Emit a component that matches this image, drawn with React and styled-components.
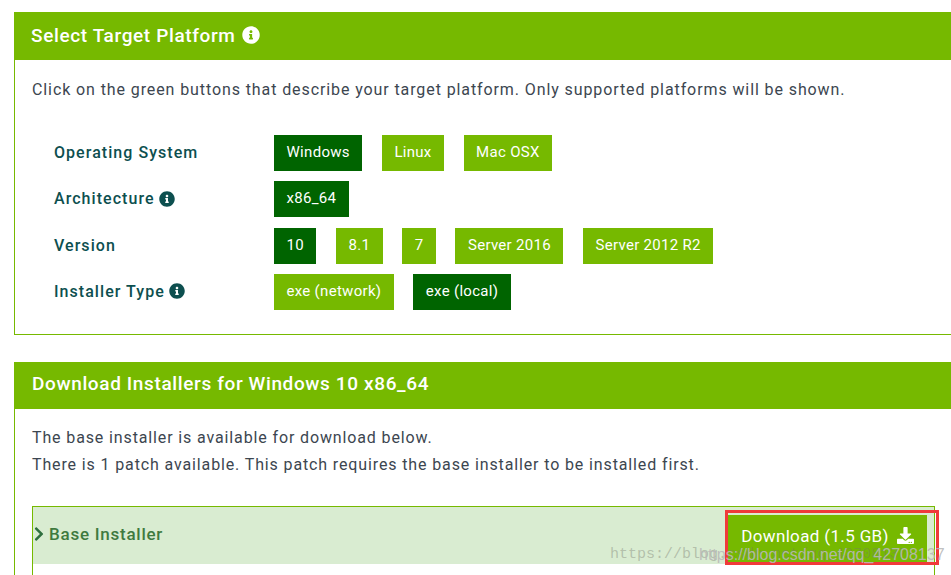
import React from 'react'
import styled, { createGlobalStyle } from 'styled-components'
import { FaInfoCircle, FaChevronRight, FaDownload } from 'react-icons/fa'

const rows = [
  { label: 'Operating System', options: [['Windows', true], ['Linux'], ['Mac OSX']] },
  { label: 'Architecture', info: true, options: [['x86_64', true]] },
  { label: 'Version', options: [['10', true], ['8.1'], ['7'], ['Server 2016'], ['Server 2012 R2']] },
  { label: 'Installer Type', info: true, options: [['exe (network)'], ['exe (local)', true]] },
]

const App = () => {
  return (
    <Root>
      <GlobalStyle />
      <Panel>
        <PanelHeader>
          Select Target Platform<HeaderInfo />
        </PanelHeader>
        <PanelBody>
          <Intro>Click on the green buttons that describe your target platform. Only supported platforms will be shown.</Intro>
          <Selector>
            {rows.map(row => (
              <Row key={row.label}>
                <RowLabel>
                  {row.label}
                  {row.info && <LabelInfo />}
                </RowLabel>
                <Options>
                  {row.options.map(([text, active]) => (
                    <Option key={text} $active={active}>{text}</Option>
                  ))}
                </Options>
              </Row>
            ))}
          </Selector>
        </PanelBody>
      </Panel>
      <Panel $second>
        <PanelHeader $second>Download Installers for Windows 10 x86_64</PanelHeader>
        <PanelBody $open>
          <Notes>
            The base installer is available for download below.<br />
            There is 1 patch available. This patch requires the base installer to be installed first.
          </Notes>
          <Accordion>
            <AccordionHeader>
              <Title>
                <FaChevronRight />
                Base Installer
              </Title>
              <DownloadButton>
                Download (1.5 GB) <FaDownload />
              </DownloadButton>
            </AccordionHeader>
          </Accordion>
        </PanelBody>
      </Panel>
      <RedMark />
      <Watermark $faint>https://blog.csdn.net/qq_42708137</Watermark>
      <Watermark>https://blog.csdn.net/qq_42708137</Watermark>
    </Root>
  )
}

const GlobalStyle = createGlobalStyle`
  html, body {
    margin: 0;
    height: 100%;
    overflow: hidden;
    background: #fff;
  }
`

const Root = styled.div`
  position: relative;
  width: 951px;
  height: 575px;
  overflow: hidden;
  padding: 12px 0 0 14px;
  box-sizing: border-box;
  font-family: 'Roboto', 'Liberation Sans', sans-serif;
`

const Panel = styled.section`
  width: 960px;
  margin-top: ${props => props.$second ? '27px' : '0'};
`

const PanelHeader = styled.h2`
  display: flex;
  align-items: center;
  height: ${props => props.$second ? '44px' : '46px'};
  margin: 0;
  padding-left: ${props => props.$second ? '18px' : '17px'};
  padding-bottom: ${props => props.$second ? '3px' : '2px'};
  background: #76b900;
  color: #fff;
  font-size: 19px;
  font-weight: 500;
  letter-spacing: 0.63px;
  white-space: pre;
`

const HeaderInfo = styled(FaInfoCircle)`
  width: 18px;
  height: 18px;
  margin-left: 6px;
`

const PanelBody = styled.div`
  border-left: 1px solid #76b900;
  border-bottom: ${props => props.$open ? 'none' : '1px solid #76b900'};
  padding: ${props => props.$open ? '15px' : '18px'} 0 0 17px;
  height: ${props => props.$open ? '200px' : 'auto'};
  padding-bottom: ${props => props.$open ? '0' : '24px'};
`

const Intro = styled.p`
  margin: 0 0 35px;
  color: #3c4650;
  font-size: 16px;
  line-height: 22px;
  letter-spacing: 0.9px;
  position: relative;
  top: 1px;
`

const Selector = styled.div`
  display: flex;
  flex-direction: column;
  gap: 10.3px;
  padding-left: 22px;
`

const Row = styled.div`
  display: flex;
  align-items: center;
`

const RowLabel = styled.div`
  display: flex;
  align-items: center;
  width: 220px;
  padding-bottom: 1px;
  color: #0d4f4f;
  font-size: 16px;
  font-weight: 500;
  letter-spacing: 1.05px;
`

const LabelInfo = styled(FaInfoCircle)`
  width: 16px;
  height: 16px;
  margin-left: 4px;
`

const Options = styled.div`
  display: flex;
  gap: 19.5px;
`

const Option = styled.div`
  height: 36px;
  line-height: 35px;
  padding: 0 12.5px;
  background: ${props => props.$active ? '#006400' : '#76b900'};
  color: #fff;
  font-size: 15px;
  letter-spacing: 0.3px;
`

const Notes = styled.p`
  margin: 0 0 28px;
  color: #3c4650;
  font-size: 16px;
  line-height: 27px;
  letter-spacing: 0.87px;
`

const Accordion = styled.div`
  width: 901px;
  height: 80px;
  border-top: 1px solid #76b900;
  border-left: 1px solid #76b900;
  border-right: 1px solid #76b900;
`

const AccordionHeader = styled.div`
  display: flex;
  align-items: center;
  justify-content: space-between;
  height: 57px;
  padding-right: 7px;
  background: #d9ecd1;
`

const Title = styled.div`
  display: flex;
  align-items: center;
  gap: 4px;
  padding-bottom: 2px;
  color: #3f7a3f;
  font-size: 17px;
  font-weight: 500;
  letter-spacing: 0.75px;

  svg {
    width: 12px;
    height: 16px;
    color: #2f6f3f;
  }
`

const DownloadButton = styled.div`
  display: flex;
  align-items: center;
  justify-content: center;
  gap: 8px;
  width: 199px;
  height: 48px;
  box-sizing: border-box;
  margin-top: 7px;
  padding-bottom: 6px;
  background: #76b900;
  color: #fff;
  font-size: 17px;
  letter-spacing: 0.35px;

  svg {
    width: 17px;
    height: 17px;
  }
`

const RedMark = styled.div`
  position: absolute;
  left: 725px;
  top: 510px;
  width: 214px;
  height: 55px;
  box-sizing: border-box;
  border: 3px solid #f03a3a;
`

const Watermark = styled.div`
  position: absolute;
  left: ${props => props.$faint ? '610px' : '699px'};
  top: 546px;
  font-family: ${props => props.$faint ? "'Liberation Mono', monospace" : "'Liberation Sans', sans-serif"};
  font-size: ${props => props.$faint ? '15px' : '16px'};
  color: ${props => props.$faint ? 'rgba(120, 120, 110, 0.4)' : 'rgba(185, 185, 185, 0.9)'};
  white-space: nowrap;
`

export default App
